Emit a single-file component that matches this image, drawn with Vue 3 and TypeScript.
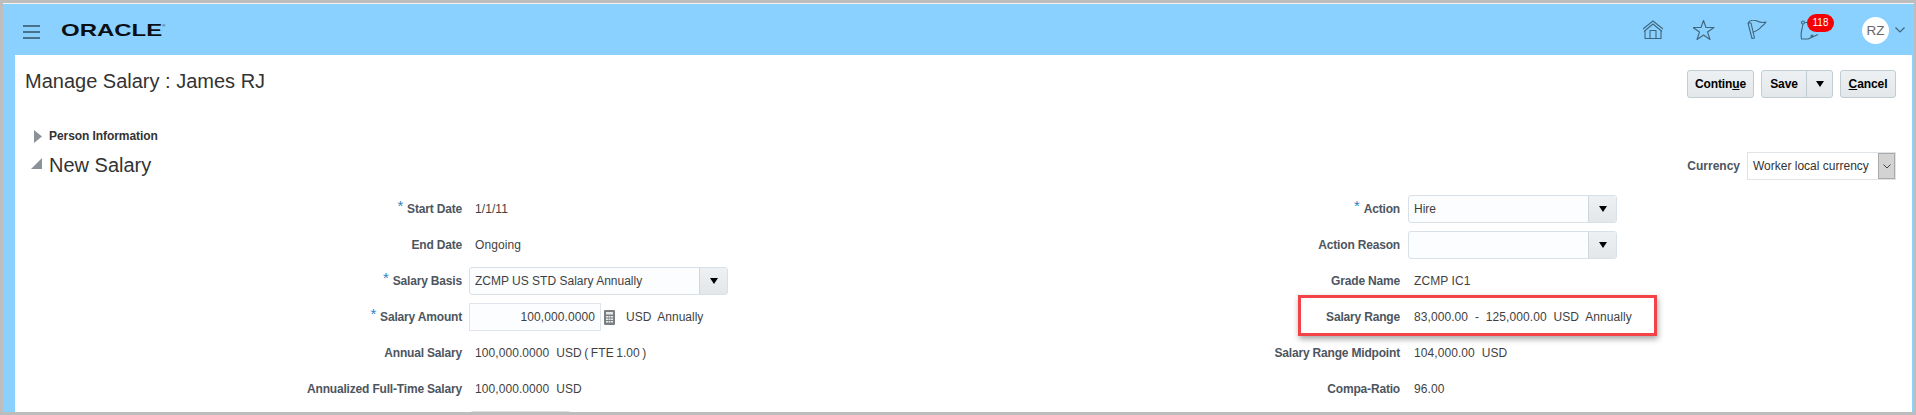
<script setup lang="ts">
interface Row {
  label: string
  required?: boolean
  kind: 'text' | 'select' | 'amount' | 'stub'
  value?: string
}

const leftRows: Row[] = [
  { label: 'Start Date', required: true, kind: 'text', value: '1/1/11' },
  { label: 'End Date', kind: 'text', value: 'Ongoing' },
  { label: 'Salary Basis', required: true, kind: 'select', value: 'ZCMP US STD Salary Annually' },
  { label: 'Salary Amount', required: true, kind: 'amount', value: '100,000.0000' },
  { label: 'Annual Salary', kind: 'text', value: '100,000.0000\u00a0 USD\u2009(\u2009FTE\u20091.00\u2009)' },
  { label: 'Annualized Full-Time Salary', kind: 'text', value: '100,000.0000\u00a0 USD' },
  { label: '', kind: 'stub' },
]

const rightRows: Row[] = [
  { label: 'Action', required: true, kind: 'select', value: 'Hire' },
  { label: 'Action Reason', kind: 'select', value: '' },
  { label: 'Grade Name', kind: 'text', value: 'ZCMP IC1' },
  { label: 'Salary Range', kind: 'text', value: '83,000.00\u00a0 -\u00a0 125,000.00\u00a0 USD\u00a0 Annually' },
  { label: 'Salary Range Midpoint', kind: 'text', value: '104,000.00\u00a0 USD' },
  { label: 'Compa-Ratio', kind: 'text', value: '96.00' },
]

const columns = [
  { name: 'left', rows: leftRows },
  { name: 'right', rows: rightRows },
]
</script>

<template>
  <div class="frame">
    <header class="topbar">
      <div class="brand">
        <div class="burger"><span></span><span></span><span></span></div>
        <div class="logo">ORACLE<sup>®</sup></div>
      </div>
      <nav class="top-icons">
        <svg class="icon home" width="20" height="20" viewBox="0 0 20 20">
          <path d="M0 9 10 1l10 8M1 11.500 10 4l9 7.500M2 10v8.500h16V10M7 18.500V10.500h6v8" />
        </svg>
        <svg class="icon star" width="22" height="20" viewBox="0 0 22 20">
          <path d="M10.500.5 13 7.500h8L14.500 12 17 19.500 10.500 15 4 19.500 6.500 12 0 7.500h8z" />
        </svg>
        <svg class="icon flag" width="20" height="20" viewBox="0 0 20 20">
          <path d="M1 3 5 18.500l2.500-.5L4 3zM1 3C3 0 7-.5 10 1c3 1.500 6 2 9 1-2 3-3.500 4-5 5-2 3-5 4-8.500 5.500" />
        </svg>
        <div class="notes">
          <svg class="icon" width="20" height="20" viewBox="0 0 20 20">
            <circle cx="3" cy="2.500" r="1.500" />
            <circle cx="12" cy="16" r="1" />
            <path d="M3 4 2 9Q.5 14 1.500 19H8l10-4.500M4.500 2.500H9" />
          </svg>
          <span class="badge">118</span>
        </div>
        <div class="user">
          <span class="avatar">RZ</span>
          <svg class="chev" width="10" height="6" viewBox="0 0 10 6"><path d="M.5.500 5 5 9.500.500" /></svg>
        </div>
      </nav>
    </header>

    <main class="content">
      <div class="title-row">
        <h1 class="title">Manage Salary : James RJ</h1>
        <div class="actions">
          <button class="btn continue">Contin<u>u</u>e</button>
          <div class="btn split">
            <span class="split-main">Save</span>
            <span class="split-arrow"><i class="arrow"></i></span>
          </div>
          <button class="btn cancel"><u>C</u>ancel</button>
        </div>
      </div>

      <div class="disclosure">
        <svg width="8" height="13" viewBox="0 0 8 13"><path d="M0 0l8 6.500L0 13z" fill="#8b9299" /></svg>
        <span>Person Information</span>
      </div>

      <div class="section-row">
        <div class="section-head">
          <svg width="11" height="11" viewBox="0 0 11 11"><path d="M11 0v11H0z" fill="#8b9299" /></svg>
          <h2>New Salary</h2>
        </div>
        <div class="currency">
          <span class="label currency-label">Currency</span>
          <div class="currency-select">
            <span>Worker local currency</span>
            <span class="currency-btn">
              <svg width="8" height="5" viewBox="0 0 8 5"><path d="M.5.500 4 4 7.500.500" /></svg>
            </span>
          </div>
        </div>
      </div>

      <div class="form">
        <div v-for="col in columns" :key="col.name" class="form-col" :class="col.name">
          <template v-for="row in col.rows" :key="row.label">
            <div class="label">
              <span v-if="row.required" class="req">*</span>{{ row.label }}
            </div>
            <div class="field">
              <span v-if="row.kind === 'text'" class="value">{{ row.value }}</span>
              <div v-else-if="row.kind === 'select'" class="select" :class="`select-${col.name}`">
                <span class="select-text">{{ row.value }}</span>
                <span class="select-btn"><i class="arrow"></i></span>
              </div>
              <template v-else-if="row.kind === 'amount'">
                <div class="amount">{{ row.value }}</div>
                <svg class="calc" width="11" height="15" viewBox="0 0 11 15">
                  <rect width="11" height="15" rx="1" fill="#7b7f82" />
                  <rect x="2" y="2" width="7" height="2.500" fill="#e6e8e9" />
                  <path d="M2 6h2v1.500H2zM4.500 6h2v1.500h-2zM7 6h2v1.500H7zM2 8.500h2V10H2zM4.500 8.500h2V10h-2zM7 8.500h2V10H7zM2 11h2v1.500H2zM4.500 11h2v1.500h-2zM7 11h2v1.500H7z" fill="#e6e8e9" />
                </svg>
                <span class="amount-unit">USD&nbsp; Annually</span>
              </template>
              <div v-else class="stub"></div>
            </div>
          </template>
          <div v-if="col.name === 'right'" class="highlight"></div>
        </div>
      </div>
    </main>
  </div>
</template>

<style scoped>
.frame {
  box-sizing: border-box;
  width: 1916px;
  height: 415px;
  overflow: hidden;
  display: flex;
  flex-direction: column;
  border: solid #bdbdbd;
  border-width: 3px 2px 3px 3px;
  background: #8bd1ff;
  box-shadow: inset 0 1px 0 #f2f2f2;
  font-family: "Liberation Sans", Arial, sans-serif;
  font-size: 12px;
  color: #3f3f3f;
}

.topbar {
  flex: none;
  height: 52px;
  display: flex;
  align-items: center;
  justify-content: space-between;
}

.brand {
  display: flex;
  align-items: center;
  margin-left: 20px;
}

.burger {
  width: 17px;
  display: flex;
  flex-direction: column;
  gap: 4px;
  margin-top: 5px;
}

.burger span {
  height: 2px;
  background: #48728a;
}

.logo {
  margin-left: 21px;
  margin-top: 4px;
  width: 103px;
  font-weight: 700;
  font-size: 17px;
  line-height: 20px;
  color: #0b0f14;
  transform: scaleX(1.41);
  transform-origin: left center;
  white-space: nowrap;
}

.logo sup {
  font-size: 3px;
  font-weight: 400;
  vertical-align: 9px;
  line-height: 0;
}

.top-icons {
  display: flex;
  align-items: center;
  margin-right: 9px;
  padding-top: 1px;
}

.icon {
  display: block;
  fill: none;
  stroke: #3f667c;
  stroke-width: 1.1;
  stroke-linejoin: round;
}

.home {
  margin-right: 30px;
}

.star {
  margin-right: 32px;
}

.flag {
  margin-right: 33px;
}

.notes {
  position: relative;
  margin-right: 42px;
}

.badge {
  position: absolute;
  left: 7px;
  top: -6px;
  width: 27px;
  height: 18px;
  border-radius: 9px;
  background: #f50000;
  color: #fff;
  font-size: 10px;
  line-height: 18px;
  text-align: center;
}

.user {
  display: flex;
  align-items: center;
  margin-top: 1px;
}

.avatar {
  width: 27px;
  height: 27px;
  border-radius: 50%;
  background: #fff;
  color: #666;
  font-size: 13.5px;
  line-height: 27px;
  text-align: center;
}

.chev {
  margin-left: 6px;
  fill: none;
  stroke: #3f667c;
  stroke-width: 1.2;
}

.content {
  flex: 1;
  margin-left: 12px;
  margin-right: 2px;
  padding: 15px 16px 0 10px;
  background: #fff;
  min-height: 0;
}

.title-row {
  display: flex;
  justify-content: space-between;
  align-items: flex-start;
  height: 28px;
}

.title {
  margin: -1px 0 0;
  font-weight: 400;
  font-size: 20px;
  line-height: 24px;
  color: #333;
}

.actions {
  display: flex;
  gap: 7px;
}

.btn {
  box-sizing: border-box;
  height: 28px;
  padding: 0;
  border: 1px solid #c2ccd3;
  border-radius: 3px;
  background: linear-gradient(#eef1f3, #e3e7ea);
  font: 700 12px "Liberation Sans", Arial, sans-serif;
  letter-spacing: -0.1px;
  color: #000;
}

.continue {
  width: 67px;
}

.cancel {
  width: 56px;
}

.split {
  display: flex;
  width: 72px;
}

.split-main {
  width: 44px;
  line-height: 26px;
  text-align: center;
  border-right: 1px solid #c2ccd3;
}

.split-arrow {
  flex: 1;
  display: flex;
  align-items: center;
  justify-content: center;
}

.arrow {
  display: block;
  width: 0;
  height: 0;
  border-style: solid;
  border-width: 6px 4.500px 0;
  border-color: #000 transparent transparent;
}

.disclosure {
  display: flex;
  align-items: center;
  height: 20px;
  margin-top: 28px;
  margin-left: 9px;
  font-weight: 700;
  letter-spacing: -0.07px;
  color: #333;
}

.disclosure span {
  margin-left: 7px;
}

.section-row {
  display: flex;
  justify-content: space-between;
  align-items: center;
  height: 28px;
  margin-top: 6px;
}

.section-head {
  display: flex;
  align-items: center;
  margin-left: 6px;
  margin-bottom: 2px;
}

.section-head svg {
  margin-bottom: 3px;
}

.section-head h2 {
  margin: 0 0 0 7px;
  font-weight: 400;
  font-size: 20px;
  line-height: 24px;
  color: #333;
}

.currency {
  display: flex;
  align-items: center;
}

.currency-select {
  box-sizing: border-box;
  width: 149px;
  height: 28px;
  margin-left: 7px;
  display: flex;
  align-items: center;
  justify-content: space-between;
  padding-left: 5px;
  border: 1px solid #dfe4e8;
  color: #333;
}

.currency-btn {
  box-sizing: border-box;
  width: 17px;
  height: 26px;
  display: flex;
  align-items: center;
  justify-content: center;
  background: #d3d3d3;
  border: 1px solid #a9a9a9;
}

.currency-btn svg {
  fill: none;
  stroke: #444;
}

.label {
  font-weight: 700;
  letter-spacing: -0.18px;
  color: #4d5560;
  text-align: right;
  white-space: nowrap;
}

.currency-label {
  letter-spacing: 0;
}

.form {
  display: flex;
  margin: 15px -16px 0 -10px;
}

.form-col {
  position: relative;
  display: grid;
  grid-auto-rows: 28px;
  row-gap: 8px;
  align-items: center;
  align-self: flex-start;
  width: 800px;
}

.form-col.left {
  grid-template-columns: 447px 1fr;
  column-gap: 7px;
}

.form-col.right {
  grid-template-columns: 585px 1fr;
  column-gap: 8px;
}

.req {
  margin-right: 4px;
  color: #2f7fc4;
  font-size: 15px;
  font-weight: 400;
  line-height: 0;
  vertical-align: 2px;
}

.field {
  display: flex;
  align-items: center;
  height: 28px;
}

.value {
  padding-left: 6px;
  letter-spacing: 0.08px;
  white-space: nowrap;
}

.select {
  box-sizing: border-box;
  height: 28px;
  display: flex;
  align-items: center;
  justify-content: space-between;
  border: 1px solid #d9e1e7;
  border-radius: 3px;
  background: #fbfdfe;
}

.select-left {
  width: 259px;
}

.select-right {
  width: 209px;
}

.select-text {
  padding-left: 5px;
}

.select-btn {
  width: 27px;
  height: 26px;
  display: flex;
  align-items: center;
  justify-content: center;
  background: linear-gradient(#eef1f3, #e3e7ea);
  border-left: 1px solid #d0d7dc;
}

.amount {
  box-sizing: border-box;
  width: 132px;
  height: 28px;
  padding-right: 5px;
  border: 1px solid #dfe5ea;
  background: #fbfdfe;
  letter-spacing: 0.1px;
  line-height: 26px;
  text-align: right;
}

.calc {
  margin-left: 3px;
}

.amount-unit {
  margin-left: 11px;
  white-space: nowrap;
}

.stub {
  box-sizing: border-box;
  width: 101px;
  height: 28px;
  margin-left: 1px;
  border: 1px solid #d9dedf;
  border-radius: 3px;
}

.highlight {
  position: absolute;
  left: 483px;
  top: 100px;
  box-sizing: border-box;
  width: 359px;
  height: 41px;
  border: 3px solid #f44346;
  box-shadow: 1px 3px 6px rgba(0, 0, 0, 0.35);
}
</style>

<style>
html,
body {
  margin: 0;
  background: #fff;
  overflow: hidden;
}
</style>
